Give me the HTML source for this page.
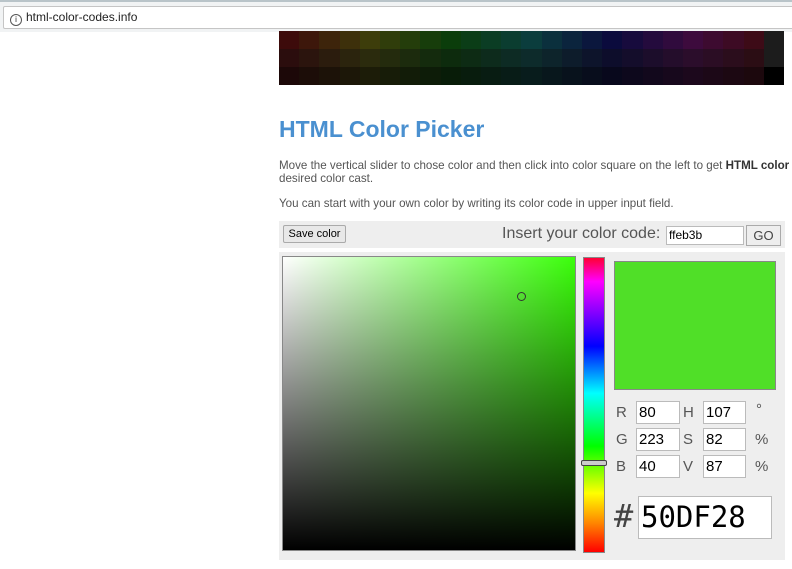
<!DOCTYPE html>
<html><head><style>
body{margin:0;width:792px;height:569px;overflow:hidden;background:#fff;font-family:"Liberation Sans",sans-serif;position:relative}
.bar{position:absolute;left:0;top:0;width:792px;height:30px;background:#f1f3f4;border-top:2px solid #b9c4c9}
.url{position:absolute;left:3px;top:4px;width:800px;height:21px;background:#fff;border:1px solid #c5c5c5;border-radius:2px;font-size:12px;line-height:21px;color:#222}
.pal{position:absolute;left:279px;top:31px;width:505px;height:54px;display:flex;flex-direction:column}
.row{flex:1;display:flex}.row div{flex:1}
.abs{position:absolute}
</style></head><body>
<div class="bar"><div class="url"><span style="display:inline-block;width:10px;height:10px;border:1px solid #555;border-radius:50%;font-size:8px;line-height:10px;text-align:center;margin:0 4px 0 6px;vertical-align:-1px">i</span>html-color-codes.info</div></div>
<div class="pal" id="pal"></div>
<div class="abs" style="left:279px;top:116px;font-size:23px;font-weight:bold;color:#4a90d0">HTML Color Picker</div>
<div class="abs" style="left:279px;top:159px;font-size:11.6px;color:#555;line-height:13px;white-space:nowrap">Move the vertical slider to chose color and then click into color square on the left to get <b style="color:#333">HTML color</b><br>desired color cast.</div>
<div class="abs" style="left:279px;top:197px;font-size:11.6px;color:#555">You can start with your own color by writing its color code in upper input field.</div>
<div class="abs" style="left:279px;top:221px;width:506px;height:27px;background:#eee"></div>
<div class="abs" style="left:283px;top:225px;width:61px;height:16px;border:1px solid #aaa;background:#e8e8e8;font-size:11px;line-height:16px;text-align:center;border-radius:2px">Save color</div>
<div class="abs" style="left:502px;top:225px;font-size:16px;color:#555">Insert your color code:</div>
<div class="abs" style="left:666px;top:226px;width:74px;height:17px;background:#fff;border:1px solid #bbb;font-size:12px;line-height:17px;padding-left:2px">ffeb3b</div>
<div class="abs" style="left:746px;top:225px;width:33px;height:19px;border:1px solid #aaa;background:#eee;font-size:13px;line-height:19px;text-align:center;color:#444">GO</div>
<div class="abs" style="left:279px;top:252px;width:506px;height:308px;background:#eee"></div>
<div class="abs" style="left:282px;top:256px;width:292px;height:293px;border:1px solid #888;background:linear-gradient(to bottom,rgba(0,0,0,0),#000),linear-gradient(to right,#fff,#3bff0b)"></div>
<div class="abs" style="left:517px;top:292px;width:7px;height:7px;border:1px solid #333;border-radius:50%"></div>
<div class="abs" style="left:583px;top:257px;width:20px;height:294px;border:1px solid #888;background:linear-gradient(to bottom,#f03,#f0f 8%,#00f 30%,#0ff 46%,#0f0 64%,#ff0 80%,#f80 90%,#f00)"></div>
<div class="abs" style="left:581px;top:460px;width:24px;height:4px;border:1px solid #444;background:#ccc;border-radius:2px"></div>
<div class="abs" style="left:614px;top:261px;width:160px;height:127px;border:1px solid #888;background:#50df28"></div>
<div class="abs" style="font-size:15px;color:#555;left:616px;top:404px">R</div>
<div class="abs" style="font-size:15px;color:#555;left:616px;top:431px">G</div>
<div class="abs" style="font-size:15px;color:#555;left:616px;top:458px">B</div>
<div class="abs" style="font-size:15px;color:#555;left:683px;top:404px">H</div>
<div class="abs" style="font-size:15px;color:#555;left:683px;top:431px">S</div>
<div class="abs" style="font-size:15px;color:#555;left:683px;top:458px">V</div>
<div class="abs" style="font-size:15px;color:#555;left:756px;top:401px">°</div>
<div class="abs" style="font-size:15px;color:#555;left:755px;top:431px">%</div>
<div class="abs" style="font-size:15px;color:#555;left:755px;top:458px">%</div>
<div class="abs" style="left:636px;top:401px;width:40px;height:21px;background:#fff;border:1px solid #bbb;font-size:15px;line-height:21px;padding-left:2px">80</div>
<div class="abs" style="left:636px;top:428px;width:40px;height:21px;background:#fff;border:1px solid #bbb;font-size:15px;line-height:21px;padding-left:2px">223</div>
<div class="abs" style="left:636px;top:455px;width:40px;height:21px;background:#fff;border:1px solid #bbb;font-size:15px;line-height:21px;padding-left:2px">40</div>
<div class="abs" style="left:703px;top:401px;width:39px;height:21px;background:#fff;border:1px solid #bbb;font-size:15px;line-height:21px;padding-left:2px">107</div>
<div class="abs" style="left:703px;top:428px;width:39px;height:21px;background:#fff;border:1px solid #bbb;font-size:15px;line-height:21px;padding-left:2px">82</div>
<div class="abs" style="left:703px;top:455px;width:39px;height:21px;background:#fff;border:1px solid #bbb;font-size:15px;line-height:21px;padding-left:2px">87</div>
<div class="abs" style="left:614px;top:497px;font-size:32px;color:#444;font-family:'DejaVu Sans Mono',monospace">#</div>
<div class="abs" style="left:638px;top:496px;width:130px;height:41px;background:#fff;border:1px solid #bbb;font-size:29px;line-height:41px;padding-left:2px;font-family:'DejaVu Sans Mono',monospace">50DF28</div>
<script>
var p=document.getElementById('pal'),L=[14,11,7];
for(var r=0;r<3;r++){var row=document.createElement('div');row.className='row';
for(var c=0;c<25;c++){var d=document.createElement('div');
if(c==24)d.style.background=r==2?'#000':'#1c1c1c';else d.style.background='hsl('+(c*15)+','+(r==0?70:55)+'%,'+L[r]+'%)';row.appendChild(d);}
p.appendChild(row);}
</script>
</body></html>
